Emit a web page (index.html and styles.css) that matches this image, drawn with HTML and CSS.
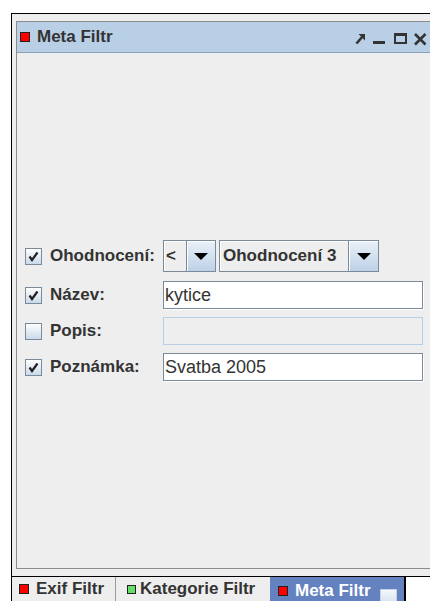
FILE: index.html
```html
<!DOCTYPE html>
<html lang="cs">
<head>
<meta charset="utf-8">
<title>Meta Filtr</title>
<link rel="stylesheet" href="styles.css">
</head>
<body>
<div class="frame">
  <div class="panel">
    <div class="titlebar">
      <span class="sq red"></span>
      <span class="title">Meta Filtr</span>
      <svg class="tools" width="76" height="30" viewBox="0 0 76 30">
        <!-- undock arrow -->
        <polygon points="3.5,12 10,12 10,18.5" fill="#333"/>
        <line x1="1.5" y1="21.5" x2="8" y2="14" stroke="#333" stroke-width="2.6"/>
        <!-- minimize -->
        <rect x="18" y="19" width="12" height="3" fill="#333"/>
        <!-- maximize -->
        <rect x="40" y="12" width="11" height="9" fill="none" stroke="#333" stroke-width="2"/>
        <rect x="39" y="11" width="13" height="3" fill="#333"/>
        <!-- close -->
        <path d="M60 12 L70.5 22.5 M70.5 12 L60 22.5" stroke="#333" stroke-width="2.6"/>
      </svg>
    </div>
    <div class="content">
      <div class="row row-first">
        <span class="check on"><svg width="15" height="15" viewBox="0 0 15 15"><path d="M3.5 7.5 L6 11 L11.5 3.5" fill="none" stroke="#222" stroke-width="2.2"/></svg></span>
        <span class="label">Ohodnocení:</span>
        <div class="combo combo-op">
          <span class="val">&lt;</span>
          <span class="btn"><span class="tri"></span></span>
        </div>
        <div class="combo combo-rating">
          <span class="val">Ohodnocení 3</span>
          <span class="btn"><span class="tri"></span></span>
        </div>
      </div>
      <div class="row">
        <span class="check on"><svg width="15" height="15" viewBox="0 0 15 15"><path d="M3.5 7.5 L6 11 L11.5 3.5" fill="none" stroke="#222" stroke-width="2.2"/></svg></span>
        <span class="label">Název:</span>
        <div class="field">kytice</div>
      </div>
      <div class="row">
        <span class="check"></span>
        <span class="label">Popis:</span>
        <div class="field disabled"></div>
      </div>
      <div class="row">
        <span class="check on"><svg width="15" height="15" viewBox="0 0 15 15"><path d="M3.5 7.5 L6 11 L11.5 3.5" fill="none" stroke="#222" stroke-width="2.2"/></svg></span>
        <span class="label">Poznámka:</span>
        <div class="field">Svatba 2005</div>
      </div>
    </div>
  </div>
</div>
<div class="tabs">
  <div class="tab tab-exif"><span class="sq red"></span><span class="tab-text">Exif Filtr</span></div>
  <div class="tab tab-cat"><span class="sq green"></span><span class="tab-text">Kategorie Filtr</span></div>
  <div class="tab tab-meta selected"><span class="sq red"></span><span class="tab-text">Meta Filtr</span><span class="tab-box"></span></div>
</div>
</body>
</html>
```
FILE: styles.css
```css
* {
  box-sizing: border-box;
}

html,
body {
  margin: 0;
  background: #fff;
}

body {
  width: 430px;
  height: 601px;
  overflow: hidden;
  font-family: "Liberation Sans", Arial, sans-serif;
  font-size: 17px;
  color: #333;
}

/* outer window, its right side runs past the viewport */
.frame {
  margin: 13px 0 0 11px;
  width: 430px;
  height: 564px;
  border: 1px solid #000;
  padding: 7px 0 7px 4px;
  background: #eee;
}

.panel {
  width: 416px;
  height: 548px;
  border: 1px solid #8c8c8c;
  display: flex;
  flex-direction: column;
}

.titlebar {
  height: 31px;
  flex: none;
  background: #b8cfe5;
  border-bottom: 1px solid #8aa0b8;
  display: flex;
  align-items: center;
  padding-left: 3px;
}

.title {
  font-weight: bold;
  margin-left: 7px;
}

.tools {
  margin-left: auto;
  display: block;
}

.sq {
  display: inline-block;
  width: 10px;
  height: 10px;
  flex: none;
  border: 1px solid #222;
}

.sq.red {
  background: #f00;
}

.sq.green {
  background: #6d6;
  width: 9px;
  height: 9px;
}

/* form */
.content {
  flex: 1;
  display: flex;
  flex-direction: column;
  justify-content: center;
  padding: 0 8px;
}

.row {
  display: flex;
  align-items: center;
  height: 28px;
}

.row + .row {
  margin-top: 8px;
}

.row-first {
  height: 32px;
  margin-bottom: 1px;
}

.check {
  width: 17px;
  height: 17px;
  flex: none;
  border: 1px solid #7a8a99;
  background: linear-gradient(#fff, #c9d9eb);
  display: flex;
  align-items: center;
  justify-content: center;
}

.check svg {
  display: block;
}

.label {
  width: 121px;
  flex: none;
  padding-left: 8px;
  font-weight: bold;
  white-space: nowrap;
}

.field {
  flex: 1;
  height: 28px;
  border: 1px solid #7a8a99;
  box-shadow: 1px 1px 0 #fff;
  background: #fff;
  padding-left: 1px;
  font-size: 18px;
  line-height: 26px;
  white-space: nowrap;
}

.field.disabled {
  border-color: #b8cfe5;
  background: #eee;
  box-shadow: none;
}

.combo {
  display: flex;
  height: 32px;
  border: 1px solid #7a8a99;
  flex: none;
}

.combo-op {
  width: 53px;
}

.combo-rating {
  width: 160px;
  margin-left: 3px;
}

.combo .val {
  flex: 1;
  background: #eee;
  box-shadow: inset 1px 1px 0 #fff;
  font-weight: bold;
  padding-left: 3px;
  line-height: 30px;
  white-space: nowrap;
}

.combo-op .val {
  padding-left: 2px;
}

.combo .btn {
  width: 29px;
  flex: none;
  border-left: 1px solid #7a8a99;
  background: linear-gradient(#eaf1f8, #bcd1e6);
  box-shadow: inset 1px 1px 0 #fff;
  display: flex;
  align-items: center;
  justify-content: center;
}

.combo-rating .btn {
  width: 30px;
}

.tri {
  width: 0;
  height: 0;
  border-left: 7px solid transparent;
  border-right: 7px solid transparent;
  border-top: 7px solid #000;
}

/* tabs under the window */
.tabs {
  display: flex;
  margin-left: 11px;
  height: 24px;
  border-left: 1px solid #000;
}

.tab {
  display: flex;
  align-items: center;
  height: 24px;
  background: #eee;
  font-weight: bold;
  white-space: nowrap;
}

.tab-exif {
  width: 104px;
  padding-left: 7px;
  border-right: 1px solid #9a9a9a;
}

.tab-exif .tab-text {
  margin-left: 7px;
}

.tab-cat {
  width: 154px;
  padding-left: 11px;
}

.tab-cat .tab-text {
  margin-left: 4px;
}

.tab-meta {
  width: 136px;
  padding-left: 8px;
  padding-top: 4px;
  background: #6382bf;
  color: #fff;
  border-right: 2px solid #000;
}

.tab-meta .tab-text {
  margin-left: 7px;
}

.tab-box {
  width: 17px;
  height: 16px;
  margin-left: 9px;
  align-self: flex-start;
  margin-top: 8px;
  background: linear-gradient(#f4f7fb, #d4e0ee);
  border: 1px solid #c3d2e3;
}
```
